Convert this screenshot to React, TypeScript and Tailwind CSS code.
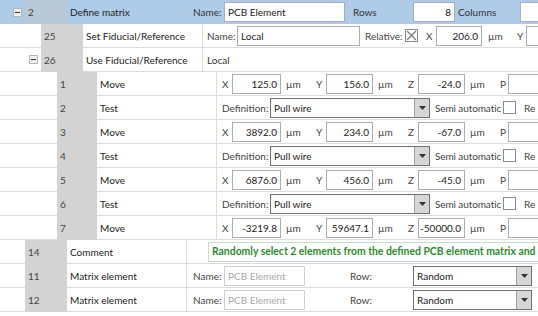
import React from "react";

type Level = 1 | 2 | 3;

const indentW: Record<Level, string> = {
  1: "w-[25px]",
  2: "w-[41px]",
  3: "w-[57px]",
};

const numW: Record<Level, string> = {
  1: "w-[42px]",
  2: "w-[42px]",
  3: "w-[40px]",
};

function Expander() {
  return (
    <span className="flex h-[9px] w-[9px] items-center justify-center border border-[#b5b5b5] bg-[#f0f0f0]">
      <span className="h-px w-[5px] bg-[#333]" />
    </span>
  );
}

function Box({ value, className = "", right = true }: { value?: string; className?: string; right?: boolean }) {
  return (
    <div
      className={`flex h-[20px] items-center border border-[#abadb3] bg-white px-[3px] text-[#222] ${right ? "justify-end" : ""} ${className}`}
    >
      {value}
    </div>
  );
}

function Check({ checked = false }: { checked?: boolean }) {
  return (
    <span className="flex h-[13px] w-[13px] shrink-0 items-center justify-center border border-[#8a8a8a] bg-white">
      {checked && (
        <svg width="11" height="11" viewBox="0 0 11 11">
          <path d="M1 1 L10 10 M10 1 L1 10" stroke="#7a7a7a" strokeWidth="1.3" />
        </svg>
      )}
    </span>
  );
}

function Select({ value, className = "" }: { value: string; className?: string }) {
  return (
    <div className={`flex h-[20px] items-stretch border border-[#707070] bg-white ${className}`}>
      <div className="flex flex-1 items-center pl-[3px] text-[#222]">{value}</div>
      <div className="flex w-[15px] items-center justify-center border-l border-[#a0a0a0] bg-[#d6d6d6]">
        <svg width="7" height="4" viewBox="0 0 7 4">
          <path d="M0 0 H7 L3.5 4 Z" fill="#333" />
        </svg>
      </div>
    </div>
  );
}

function Row({
  level,
  num,
  name,
  expander,
  selected,
  children,
}: {
  level: Level;
  num: string;
  name: string;
  expander?: boolean;
  selected?: boolean;
  children?: React.ReactNode;
}) {
  const line = selected ? "" : "border-b border-[#dcdcdc]";
  return (
    <div className={`flex h-[24px] shrink-0 ${selected ? "bg-[#aecbe7]" : "bg-white"}`}>
      <div className={`flex h-full shrink-0 items-center justify-end pr-[3px] ${indentW[level]} ${line}`}>
        {expander && <Expander />}
      </div>
      <div
        className={`flex h-full shrink-0 items-center pl-[3px] text-[#444] ${numW[level]} ${selected ? "bg-[#b9c9d8]" : "bg-[#d3d3d3]"}`}
      >
        {num}
      </div>
      <div
        className={`flex h-full w-[120px] shrink-0 items-center whitespace-nowrap pl-[3px] text-[#222] ${line} ${selected ? "" : "border-r"}`}
      >
        {name}
      </div>
      <div className={`flex h-full min-w-0 flex-1 items-center whitespace-nowrap ${line}`}>{children}</div>
    </div>
  );
}

function MoveFields({ x, y, z }: { x: string; y: string; z: string }) {
  return (
    <div className="flex items-center pl-[5px] text-[#444]">
      <span className="w-[10px] shrink-0">X</span>
      <Box value={x} className="w-[49px] shrink-0" />
      <span className="ml-[5px] w-[30px] shrink-0">µm</span>
      <span className="w-[10px] shrink-0">Y</span>
      <Box value={y} className="w-[47px] shrink-0" />
      <span className="ml-[5px] w-[30px] shrink-0">µm</span>
      <span className="w-[10px] shrink-0">Z</span>
      <Box value={z} className="w-[47px] shrink-0" />
      <span className="ml-[5px] w-[30px] shrink-0">µm</span>
      <span className="w-[8px] shrink-0">P</span>
      <Box className="w-[60px] shrink-0" />
    </div>
  );
}

function TestFields() {
  return (
    <div className="flex items-center pl-[5px] text-[#444]">
      <span className="w-[48px] shrink-0">Definition:</span>
      <Select value="Pull wire" className="w-[160px] shrink-0" />
      <span className="ml-[5px] w-[68px] shrink-0 tracking-[-0.1px]">Semi automatic</span>
      <Check />
      <span className="ml-[8px]">Re</span>
    </div>
  );
}

function MatrixElement() {
  return (
    <div className="flex items-center pl-[6px] text-[#444]">
      <span className="w-[31px] shrink-0">Name:</span>
      <div className="flex h-[20px] w-[81px] shrink-0 items-center border border-[#d0d0d0] bg-white px-[3px] text-[#a8a8a8]">
        PCB Element
      </div>
      <span className="ml-[45px] w-[63px] shrink-0">Row:</span>
      <Select value="Random" className="w-[119px] shrink-0" />
    </div>
  );
}

export default function App() {
  return (
    <div className="flex h-[316px] w-[538px] flex-col overflow-hidden bg-white font-['Lato',sans-serif] text-[10px] leading-none">
      <Row level={1} num="2" name="Define matrix" expander selected>
        <div className="flex items-center pl-[6px] text-[#333]">
          <span className="w-[31px] shrink-0">Name:</span>
          <Box value="PCB Element" right={false} className="w-[121px] shrink-0" />
          <span className="ml-[8px] w-[60px] shrink-0">Rows</span>
          <Box value="8" className="w-[42px] shrink-0" />
          <span className="ml-[3px] w-[62px] shrink-0">Columns</span>
          <Box className="w-[40px] shrink-0" />
        </div>
      </Row>
      <Row level={2} num="25" name="Set Fiducial/Reference">
        <div className="flex items-center pl-[4px] text-[#444]">
          <span className="w-[30px] shrink-0">Name:</span>
          <Box value="Local" right={false} className="w-[123px] shrink-0" />
          <span className="ml-[5px] w-[40px] shrink-0">Relative:</span>
          <Check checked />
          <span className="ml-[8px] w-[10px] shrink-0">X</span>
          <Box value="206.0" className="w-[46px] shrink-0" />
          <span className="ml-[6px] w-[29px] shrink-0">µm</span>
          <span className="w-[9px] shrink-0">Y</span>
          <Box className="w-[40px] shrink-0" />
        </div>
      </Row>
      <Row level={2} num="26" name="Use Fiducial/Reference" expander>
        <span className="pl-[4px] text-[#333]">Local</span>
      </Row>
      <Row level={3} num="1" name="Move">
        <MoveFields x="125.0" y="156.0" z="-24.0" />
      </Row>
      <Row level={3} num="2" name="Test">
        <TestFields />
      </Row>
      <Row level={3} num="3" name="Move">
        <MoveFields x="3892.0" y="234.0" z="-67.0" />
      </Row>
      <Row level={3} num="4" name="Test">
        <TestFields />
      </Row>
      <Row level={3} num="5" name="Move">
        <MoveFields x="6876.0" y="456.0" z="-45.0" />
      </Row>
      <Row level={3} num="6" name="Test">
        <TestFields />
      </Row>
      <Row level={3} num="7" name="Move">
        <MoveFields x="-3219.8" y="59647.1" z="-50000.0" />
      </Row>
      <Row level={1} num="14" name="Comment">
        <div className="ml-[21px] flex h-[20px] min-w-[400px] items-center border border-[#c9dcc9] bg-white pl-[3px] text-[10.4px] font-bold text-[#2e8b2e]">
          Randomly select 2 elements from the defined PCB element matrix and place them
        </div>
      </Row>
      <Row level={1} num="11" name="Matrix element">
        <MatrixElement />
      </Row>
      <Row level={1} num="12" name="Matrix element">
        <MatrixElement />
      </Row>
    </div>
  );
}
